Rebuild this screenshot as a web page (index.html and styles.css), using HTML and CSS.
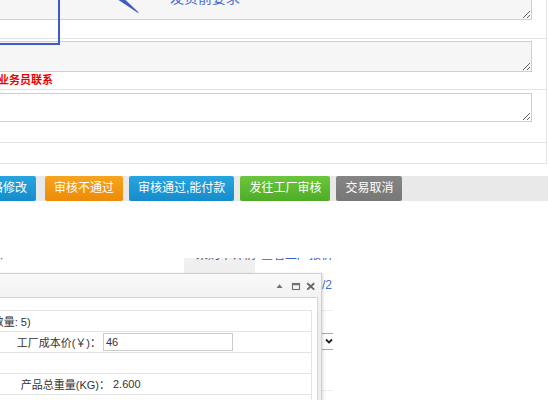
FILE: index.html
```html
<!DOCTYPE html>
<html lang="zh-CN">
<head>
<meta charset="utf-8">
<title>订单审核</title>
<link rel="stylesheet" href="styles.css">
</head>
<body>
<div class="page">
  <div class="form">
    <div class="row r1">
      <textarea class="ta ta-ro ta1" readonly></textarea>
    </div>
    <div class="row r2">
      <textarea class="ta ta-ro ta2" readonly></textarea>
      <div class="warn"><span>请与业务员联系</span></div>
    </div>
    <div class="row r3">
      <textarea class="ta ta3"></textarea>
    </div>
    <div class="row r4"></div>
  </div>

  <div class="bar">
    <span class="btn btn-blue b-first">价格修改</span>
    <span class="btn btn-orange">审核不通过</span>
    <span class="btn btn-blue">审核通过,能付款</span>
    <span class="btn btn-green">发往工厂审核</span>
    <span class="btn btn-gray">交易取消</span>
  </div>

  <div class="lower">
    <div class="strip">
      <span class="cut c-dark c-first">）</span>
      <span class="tab"><span class="cut c-dark">采购单详情页</span></span>
      <span class="cut c-blue c-link">查看工厂报价</span>
    </div>
    <div class="behind">
      <div class="pg">/2</div>
      <div class="bl"></div>
      <div class="sel">
        <svg class="chev" width="8" height="8" viewBox="0 0 8 8"><path d="M1 2.5 L4 5.5 L7 2.5" fill="none" stroke="#222" stroke-width="1.8"/></svg>
      </div>
      <div class="bl bl2"></div>
    </div>
  </div>

  <div class="window">
    <div class="win-head">
      <svg class="tools" width="42" height="12" viewBox="0 0 42 12">
        <polygon points="1.5,8 7.5,8 4.5,4.3" fill="#707070"/>
        <rect x="17.5" y="3.5" width="7" height="6" fill="none" stroke="#707070" stroke-width="1.1"/>
        <rect x="17" y="3" width="8" height="2.2" fill="#707070"/>
        <path d="M32.3 3.2 L39.2 9.6 M39.2 3.2 L32.3 9.6" stroke="#666" stroke-width="1.9"/>
      </svg>
    </div>
    <div class="win-body">
      <div class="kv">
        <div class="kv-row"><span class="shift">(装箱数量: 5)</span></div>
        <div class="kv-row">
          <span class="lbl lbl-a">工厂成本价(￥)：</span>
          <input class="inp" type="text" value="46">
        </div>
        <div class="kv-row"></div>
        <div class="kv-row">
          <span class="lbl lbl-b">产品总重量(KG)：</span>
          <span class="val">2.600</span>
        </div>
        <div class="kv-row"></div>
      </div>
    </div>
  </div>

  <div class="mark-rect"></div>
  <svg class="mark-arrow" width="150" height="20" viewBox="0 0 150 20">
    <polygon points="118.5,0 125.5,0 138.8,12.6 137.6,12.8" fill="#3d5cc8"/>
  </svg>
  <div class="mark-text">发货前要求</div>
</div>
</body>
</html>
```

FILE: styles.css
```css
* { box-sizing: border-box; }
html, body { margin: 0; padding: 0; }
body {
  width: 548px;
  height: 400px;
  overflow: hidden;
  background: #fff;
  font-family: "Liberation Sans", "Noto Sans CJK SC", sans-serif;
  font-size: 12px;
  color: #333;
}
.page {
  position: relative;
  width: 548px;
  height: 400px;
  overflow: hidden;
}

/* form rows */
.form {
  width: 547px;
  border-right: 1px solid #e3e3e3;
}
.row {
  border-bottom: 1px solid #e3e3e3;
  padding-right: 14px;
}
.r1 { height: 39px; }
.r2 { height: 51px; padding-top: 2px; }
.r3 { height: 53px; padding-top: 3px; border-bottom: 1px solid #e6e6e6; }
.r4 { height: 21px; }

.ta {
  display: block;
  width: 532px;
  margin: 0;
  padding: 2px;
  border: 1px solid #cfcfcf;
  border-left: 0;
  border-radius: 0;
  background: #fff;
  font: inherit;
  outline: none;
}
.ta-ro { background: #f6f6f6; }
.ta1 { height: 20px; border-top: 0; }
.ta2 { height: 31px; }
.ta3 { height: 29px; }

.warn {
  height: 17px;
  line-height: 17px;
  color: #f00000;
  font-size: 11px;
  font-weight: bold;
  white-space: nowrap;
  overflow: hidden;
}
.warn span {
  display: inline-block;
  margin-left: -24px;
}

/* button bar */
.bar {
  margin-top: 12px;
  height: 25px;
  background: #e9e9e9;
  display: flex;
  gap: 6px;
}
.btn {
  display: block;
  height: 25px;
  line-height: 25px;
  padding: 0 9px;
  color: #fff;
  font-size: 12px;
  border-radius: 2px;
  white-space: nowrap;
}
.b-first { margin-left: -30px; margin-right: 3px; }
.btn-blue { background: linear-gradient(#27a5e0, #168ccb); }
.btn-orange { background: linear-gradient(#f7a51f, #ec8b07); }
.btn-green { background: linear-gradient(#6cc63d, #4eac26); }
.btn-gray { background: linear-gradient(#858585, #777777); }

/* content behind the dialog */
.lower { padding-top: 57px; }
.strip {
  height: 15px;
  display: flex;
  align-items: flex-start;
  overflow: hidden;
}
.cut {
  display: block;
  font-size: 12px;
  line-height: 14px;
  margin-top: -10px;
  white-space: nowrap;
}
.c-dark { color: #555; }
.c-blue { color: #3b5fd0; }
.c-first { margin-left: 0; width: 20px; }
.tab {
  display: block;
  margin-left: 164px;
  width: 71px;
  height: 15px;
  background: #f0f0f0;
  padding-left: 12px;
  overflow: hidden;
}
.c-link { margin-left: 6px; }

.behind {
  margin-left: 322px;
  width: 11px;
  overflow: hidden;
}
.pg {
  margin-top: 5px;
  height: 14px;
  line-height: 14px;
  color: #3b6fd6;
  font-size: 12px;
  white-space: nowrap;
}
.bl {
  margin-top: 18px;
  border-top: 1px solid #eeeeee;
}
.sel {
  margin-top: 22px;
  height: 17px;
  border-top: 1px solid #aaaaaa;
  border-bottom: 1px solid #aaaaaa;
  padding: 3px 0 0 3px;
}
.chev { display: block; }
.bl2 { margin-top: 40px; }

/* dialog window */
.window {
  position: absolute;
  left: -20px;
  top: 273px;
  width: 342px;
  height: 140px;
  border: 1px solid #cfcfcf;
  background: linear-gradient(#f9f9f9, #eeeeee 40px, #eeeeee);
  padding: 0 3px 3px;
  box-shadow: 1px 1px 3px rgba(0, 0, 0, 0.15);
}
.win-head {
  height: 23px;
  display: flex;
  justify-content: flex-end;
  align-items: center;
}
.tools { display: block; margin-right: 1px; }
.win-body {
  border: 1px solid #d3d3d3;
  background: #fff;
  height: 120px;
  padding: 12px 5px 0 0;
}
.kv {
  border-top: 1px solid #e3e3e3;
  border-right: 1px solid #e3e3e3;
}
.kv-row {
  height: 21px;
  border-bottom: 1px solid #e3e3e3;
  display: flex;
  align-items: center;
  font-size: 11px;
  color: #333;
  white-space: nowrap;
}
.shift { margin-left: -18px; }
.lbl { display: block; text-align: right; }
.lbl-a { width: 116px; }
.lbl-b { width: 125px; }
.inp {
  display: block;
  margin: 0 0 0 2px;
  width: 130px;
  height: 18px;
  border: 1px solid #cccccc;
  border-radius: 0;
  padding: 0 2px;
  font-family: "Liberation Sans", "Noto Sans CJK SC", sans-serif;
  font-size: 11px;
  color: #333;
  background: #fff;
  outline: none;
}
.val { margin-left: 3px; }

/* screenshot annotation overlay */
.mark-rect {
  position: absolute;
  left: -10px;
  top: -10px;
  width: 70px;
  height: 55px;
  border: 2px solid #3d5cc8;
}
.mark-arrow {
  position: absolute;
  left: 0;
  top: 0;
}
.mark-text {
  position: absolute;
  left: 170px;
  top: -9px;
  font-size: 14px;
  line-height: 14px;
  color: #4a6cd4;
  white-space: nowrap;
}
```
